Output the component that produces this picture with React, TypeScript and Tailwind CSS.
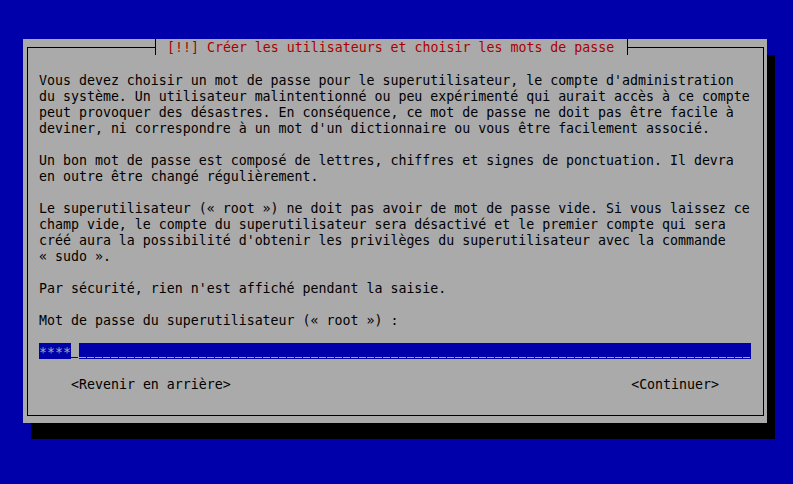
import React from "react";

const paragraphs: string[][] = [
  [
    "Vous devez choisir un mot de passe pour le superutilisateur, le compte d'administration",
    "du système. Un utilisateur malintentionné ou peu expérimenté qui aurait accès à ce compte",
    "peut provoquer des désastres. En conséquence, ce mot de passe ne doit pas être facile à",
    "deviner, ni correspondre à un mot d'un dictionnaire ou vous être facilement associé.",
  ],
  [
    "Un bon mot de passe est composé de lettres, chiffres et signes de ponctuation. Il devra",
    "en outre être changé régulièrement.",
  ],
  [
    "Le superutilisateur (« root ») ne doit pas avoir de mot de passe vide. Si vous laissez ce",
    "champ vide, le compte du superutilisateur sera désactivé et le premier compte qui sera",
    "créé aura la possibilité d'obtenir les privilèges du superutilisateur avec la commande",
    "« sudo ».",
  ],
  ["Par sécurité, rien n'est affiché pendant la saisie."],
  ["Mot de passe du superutilisateur (« root ») :"],
];

// one "_" cell of the entry field
const Blank: React.FC<{ cursor?: boolean }> = ({ cursor }) => (
  <span className={`w-2 h-4 flex items-end pb-[1px] ${cursor ? "bg-[#aaaaaa]" : ""}`}>
    <span className={`w-[7px] h-px ${cursor ? "bg-[#0000aa]" : "bg-[#aaaaaa]"}`} />
  </span>
);

const PasswordField: React.FC = () => (
  <div className="flex w-[712px] h-4 bg-[#0000aa]">
    <span className="h-4 pt-[3px] text-[#aaaaaa] leading-[13px]">****</span>
    <Blank cursor />
    {Array.from({ length: 84 }).map((_, i) => (
      <Blank key={i} />
    ))}
  </div>
);

export default function App() {
  return (
    <div
      className="w-[793px] h-[484px] bg-[#0000aa] pt-[39px] pl-[23px] overflow-hidden text-[13.288px] leading-[16px] text-black whitespace-pre"
      style={{ fontFamily: '"DejaVu Sans Mono", "Liberation Mono", monospace' }}
    >
      <div className="relative w-[744px] h-[384px] bg-[#aaaaaa] pt-[8px] pl-[4px] pr-[3px] shadow-[8px_16px_0_0_#000]">
        <div className="h-[369px] border border-black pt-[23px] pl-[11px]">
          <div className="flex flex-col gap-4">
            {paragraphs.map((lines, i) => (
              <div key={i}>
                {lines.map((line, j) => (
                  <div key={j} className="h-4 pt-[2px]">{line}</div>
                ))}
              </div>
            ))}
            <PasswordField />
            <div className="flex w-[712px] justify-between px-[32px] h-4 pt-[2px]">
              <span>&lt;Revenir en arrière&gt;</span>
              <span>&lt;Continuer&gt;</span>
            </div>
          </div>
        </div>

        {/* title sits over the top frame line */}
        <div className="absolute left-[132px] top-0 w-[473px] h-4 border-x border-black bg-[#aaaaaa] pl-[11px] pt-[1px] text-[#aa0000]">
          [!!] Créer les utilisateurs et choisir les mots de passe
        </div>
      </div>
    </div>
  );
}
